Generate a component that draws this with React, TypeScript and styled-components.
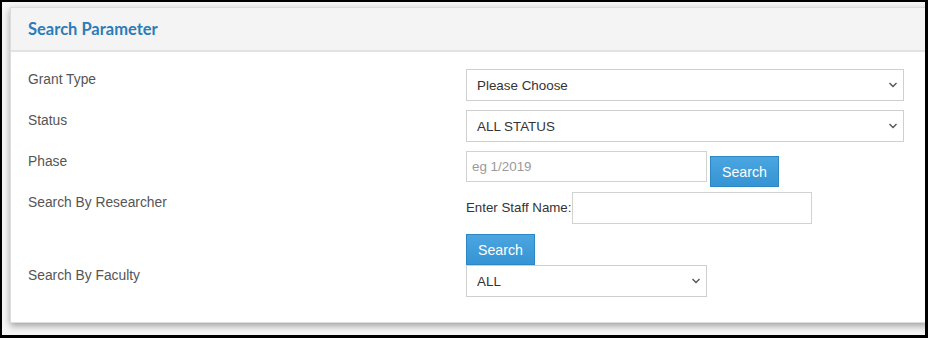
import React from 'react';
import styled, { createGlobalStyle } from 'styled-components';

const GlobalStyle = createGlobalStyle`
  html, body {
    margin: 0;
    padding: 0;
    background: #ffffff;
  }
  * {
    box-sizing: border-box;
  }
`;

const Frame = styled.div`
  width: 928px;
  height: 338px;
  border-style: solid;
  border-color: #000;
  border-width: 2px 3px 3px 2px;
  background: #f6f6f6;
  padding: 5px 0 0 8px;
  overflow: hidden;
`;

const Panel = styled.div`
  width: calc(100% + 4px);
  height: 316px;
  background: #fff;
  border: 1px solid #dcdcdc;
  box-shadow: 0 3px 7px rgba(0, 0, 0, 0.35);
  display: flex;
  flex-direction: column;
`;

const PanelHeader = styled.div`
  height: 44px;
  background: #f4f4f4;
  border-bottom: 2px solid #e2e2e2;
  display: flex;
  align-items: center;
  padding: 0 17px;
`;

const PanelTitle = styled.h3`
  margin: 0;
  font-family: Lato, 'Open Sans', sans-serif;
  font-weight: 700;
  font-size: 16.5px;
  color: #2b7cb8;
  padding-bottom: 1px;
`;

const PanelBody = styled.div`
  padding: 17px 21px 0 17px;
  display: flex;
  flex-direction: column;
`;

const Row = styled.div<{ $gap?: number }>`
  display: grid;
  grid-template-columns: 438px 1fr;
  margin-top: ${(p) => p.$gap ?? 0}px;
`;

const Label = styled.div`
  font-family: 'Liberation Sans', Arial, sans-serif;
  font-size: 13.8px;
  color: #555;
  line-height: 16px;
  padding-top: 3px;
`;

const Field = styled.div`
  display: flex;
  flex-direction: column;
  align-items: flex-start;
`;

const Inline = styled.div`
  display: flex;
  align-items: flex-start;
`;

const SelectWrap = styled.div<{ $width: string }>`
  position: relative;
  width: ${(p) => p.$width};
`;

const Select = styled.select`
  appearance: none;
  -webkit-appearance: none;
  width: 100%;
  height: 32px;
  border: 1px solid #cfcfcf;
  border-radius: 0;
  background: #fff;
  padding: 0 24px 0 10px;
  font-family: 'Liberation Sans', Arial, sans-serif;
  font-size: 13.4px;
  color: #333;
  outline: none;
`;

const Chevron = styled.svg`
  position: absolute;
  right: 6px;
  top: 12px;
  width: 10px;
  height: 8px;
  pointer-events: none;
`;

const TextInput = styled.input<{ $width: number; $ml?: number; $h?: number }>`
  width: ${(p) => p.$width}px;
  height: ${(p) => p.$h ?? 31}px;
  margin-left: ${(p) => p.$ml ?? 0}px;
  border: 1px solid #d2d2d2;
  border-radius: 0;
  padding: 0 5px;
  font-family: 'Liberation Sans', Arial, sans-serif;
  font-size: 13.4px;
  color: #333;
  outline: none;
  &::placeholder {
    color: #9a9a9a;
  }
`;

const Button = styled.button<{ $mt?: number; $ml?: number }>`
  height: 31px;
  padding: 0 11px;
  margin-top: ${(p) => p.$mt ?? 0}px;
  margin-left: ${(p) => p.$ml ?? 0}px;
  border: 1px solid #2f86c4;
  border-radius: 0;
  background: linear-gradient(#4ba6e0, #3594d4);
  color: #fff;
  font-family: 'Liberation Sans', Arial, sans-serif;
  font-size: 14.2px;
  cursor: pointer;
`;

const StaffLabel = styled.span`
  font-family: 'Liberation Sans', Arial, sans-serif;
  font-size: 13.3px;
  color: #333;
  line-height: 32px;
`;

function Dropdown({ width, value }: { width: string; value: string }) {
  return (
    <SelectWrap $width={width}>
      <Select defaultValue={value}>
        <option>{value}</option>
      </Select>
      <Chevron viewBox="0 0 10 8">
        <path d="M1.5 2 L5 5.5 L8.5 2" fill="none" stroke="#555" strokeWidth="1.4" />
      </Chevron>
    </SelectWrap>
  );
}

export default function App() {
  return (
    <>
      <GlobalStyle />
      <Frame>
        <Panel>
          <PanelHeader>
            <PanelTitle>Search Parameter</PanelTitle>
          </PanelHeader>
          <PanelBody>
            <Row>
              <Label>Grant Type</Label>
              <Dropdown width="438px" value="Please Choose" />
            </Row>
            <Row $gap={9}>
              <Label>Status</Label>
              <Dropdown width="438px" value="ALL STATUS" />
            </Row>
            <Row $gap={9}>
              <Label>Phase</Label>
              <Inline>
                <TextInput $width={241} placeholder="eg 1/2019" />
                <Button $mt={5} $ml={3}>Search</Button>
              </Inline>
            </Row>
            <Row $gap={5}>
              <Label>Search By Researcher</Label>
              <Field>
                <Inline>
                  <StaffLabel>Enter Staff Name:</StaffLabel>
                  <TextInput $width={240} $ml={1} $h={32} />
                </Inline>
                <Button $mt={10}>Search</Button>
              </Field>
            </Row>
            <Row>
              <Label>Search By Faculty</Label>
              <Dropdown width="241px" value="ALL" />
            </Row>
          </PanelBody>
        </Panel>
      </Frame>
    </>
  );
}
